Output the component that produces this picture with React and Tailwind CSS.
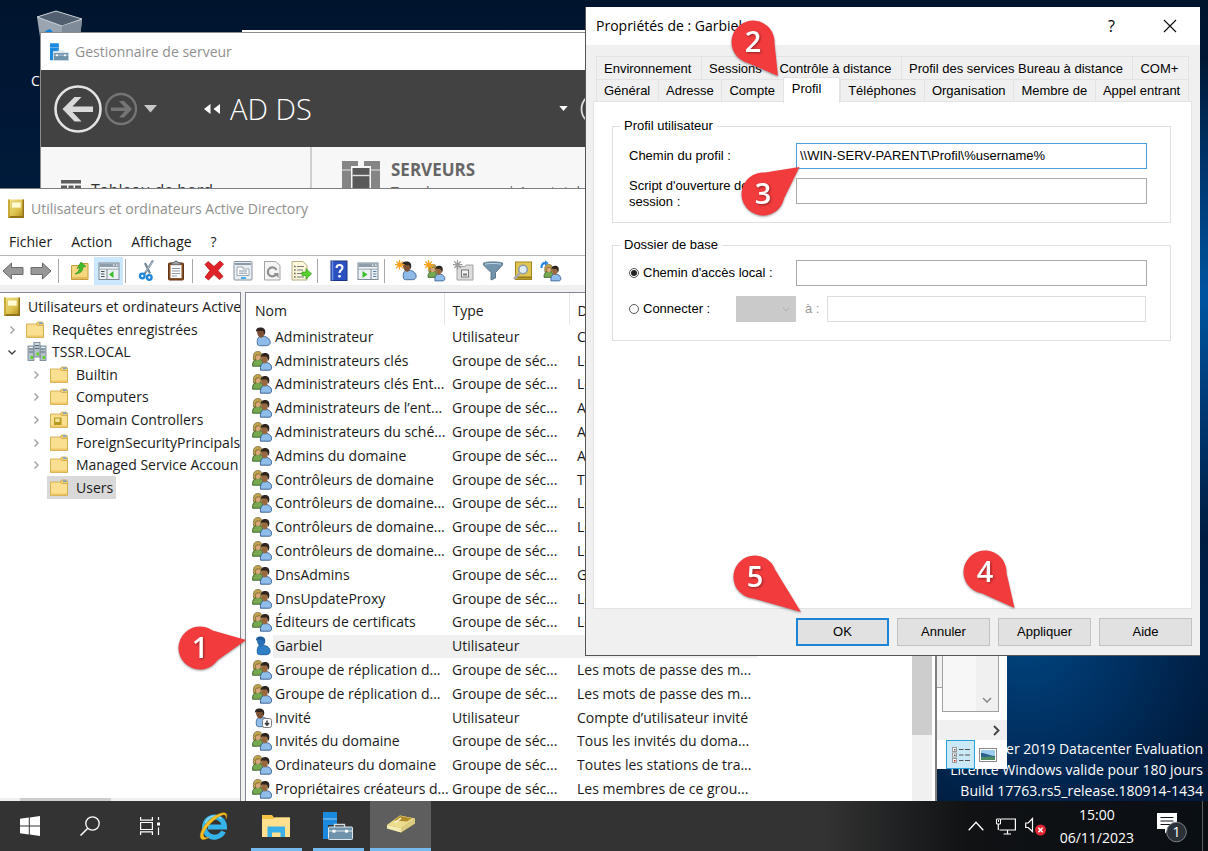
import React from "react";

const TABLE_ROWS = [
  ["user", "Administrateur", "Utilisateur", "Compte d’utilisateur d’..."],
  ["group", "Administrateurs clés", "Groupe de séc...", "Les membres de ce grou..."],
  ["group", "Administrateurs clés Ent...", "Groupe de séc...", "Les membres de ce grou..."],
  ["group", "Administrateurs de l’ent...", "Groupe de séc...", "Administrateurs désigné..."],
  ["group", "Administrateurs du sché...", "Groupe de séc...", "Administrateurs désigné..."],
  ["group", "Admins du domaine", "Groupe de séc...", "Administrateurs désigné..."],
  ["group", "Contrôleurs de domaine", "Groupe de séc...", "Tous les contrôleurs de ..."],
  ["group", "Contrôleurs de domaine...", "Groupe de séc...", "Les membres de ce grou..."],
  ["group", "Contrôleurs de domaine...", "Groupe de séc...", "Les membres de ce grou..."],
  ["group", "Contrôleurs de domaine...", "Groupe de séc...", "Les membres de ce grou..."],
  ["group", "DnsAdmins", "Groupe de séc...", "Groupe des administrat..."],
  ["group", "DnsUpdateProxy", "Groupe de séc...", "Les clients DNS qui so..."],
  ["group", "Éditeurs de certificats", "Groupe de séc...", "Les membres de ce grou..."],
  ["selected", "Garbiel", "Utilisateur", ""],
  ["group", "Groupe de réplication d...", "Groupe de séc...", "Les mots de passe des m..."],
  ["group", "Groupe de réplication d...", "Groupe de séc...", "Les mots de passe des m..."],
  ["guest", "Invité", "Utilisateur", "Compte d’utilisateur invité"],
  ["group", "Invités du domaine", "Groupe de séc...", "Tous les invités du doma..."],
  ["group", "Ordinateurs du domaine", "Groupe de séc...", "Toutes les stations de tra..."],
  ["group", "Propriétaires créateurs d...", "Groupe de séc...", "Les membres de ce grou..."],
];

/* ---------- people ---------- */

function Person({ x = 0, y = 0, body = "#8fbbe8", edge = "#3f6796", head = "#7d4f33", hair = "#2e2420" }) {
  return (
    <g transform={`translate(${x} ${y})`}>
      <path d="M3.500 17C2.600 12.600 3.600 10 6 8.600l4.500.2c3.800 1.200 5.700 3.400 5.700 6.200 0 1.900-1.700 2.900-3.700 3.200H6.500C4.800 18.200 3.700 17.800 3.500 17Z" fill={body} stroke={edge} strokeWidth=".9" />
      <path d="M3 4C3 1.500 4.600.5 6.600.5S10.600 1.600 10.600 4.300c0 3-1.400 6-3.400 6S3 7.300 3 4Z" fill={head} />
      <path d="M2 4.600C1.600 1.400 3.600 0 6.500 0s5.300 1.600 4.700 5.600L10 7.800c.2-2.400-.3-4-1.300-4.500C6.800 3.800 4 3.400 3 3.200Z" fill={hair} />
    </g>
  );
}

function UserIcon({ selected }) {
  return (
    <svg viewBox="0 0 20 20" className="size-5 shrink-0" aria-hidden="true">
      {selected ? (
        <Person x={2} y={.5} body="#2f7fc6" edge="#1d5c9c" head="#2a6fb4" hair="#1f5c9d" />
      ) : (
        <Person x={2} y={.5} />
      )}
    </svg>
  );
}

function Pair() {
  return (
    <g>
      <path d="M.6 15.200c-.3-3.700.9-5.700 2.800-6.600h4.900c2 .8 3 2.900 3 6.600Z" fill="#76a94f" stroke="#35602a" strokeWidth=".9" />
      <ellipse cx="5.800" cy="5.300" rx="2.700" ry="4" fill="#dba87c" />
      <path d="M1.600 9C.9 3.500 1.900.6 5.800.4c3.800.2 5 2.600 4.300 7.800L8.500 8.600c.4-2.700.1-4.200-.8-5-1.600.6-2.800.6-3.600.5-.7 1.300-.6 3-.3 4.900Z" fill="#bfa34c" stroke="#5e4a1c" strokeWidth=".6" />
      <path d="M8.500 19.200c-.5-4.300.7-6.700 2.800-7.500l4-.1c3.200.9 4.400 3 4.400 5.400 0 1.400-1 2-2.500 2.200Z" fill="#8fbdea" stroke="#33588a" strokeWidth=".9" />
      <ellipse cx="12.800" cy="7.800" rx="3" ry="4.500" fill="#99683f" />
      <path d="M9 6.500C8.600 3.300 10.600 2 13.200 2c3 0 4.800 2 4 6l-1.300 2.200c.1-2.600-.4-4.200-1.400-4.800-1.800.4-3.500 0-4.300-.2Z" fill="#2b241f" />
    </g>
  );
}

function GroupIcon() {
  return (
    <svg viewBox="0 0 20 20" className="size-5 shrink-0" aria-hidden="true">
      <Pair />
    </svg>
  );
}

function GuestIcon() {
  return (
    <svg viewBox="0 0 20 20" className="size-5 shrink-0" aria-hidden="true">
      <Person x={1} y={.5} />
      <rect x="10.500" y="10.500" width="9" height="9" rx="2" fill="#f8f8f8" stroke="#7b7b7b" />
      <path d="M15 12.500v4M13 15l2 2.200L17 15" fill="none" stroke="#333" strokeWidth="1.400" />
    </svg>
  );
}

/* ---------- tree and title icons ---------- */

function BookIcon() {
  return (
    <svg viewBox="0 0 18 20" className="h-5 w-[18px] shrink-0" aria-hidden="true">
      <defs>
        <linearGradient id="gold" x1="0" y1="0" x2="1" y2="1">
          <stop offset="0" stopColor="#f3e58c" />
          <stop offset=".6" stopColor="#dcc04b" />
          <stop offset="1" stopColor="#a88518" />
        </linearGradient>
      </defs>
      <rect x="1" y=".5" width="16" height="18.500" fill="url(#gold)" />
      <path d="M1 17h16v2H1ZM15.500.5H17V19h-1.500Z" fill="#94741b" />
      <rect x="1" y=".5" width="2" height="18" fill="#c9a93a" />
      <rect x="4.500" y="3" width="9.500" height="6" fill="#fffbd2" stroke="#d9c25c" strokeWidth=".7" />
    </svg>
  );
}

function FolderIcon({ badge }) {
  return (
    <svg viewBox="0 0 20 18" className="h-[18px] w-5 shrink-0" aria-hidden="true">
      <path d="M11 3.500 12.500 1h5l1 1.500V16H11Z" fill="#f0cd6c" stroke="#cda549" strokeWidth=".8" />
      <path d="M14 2.200h3.500" stroke="#6f9fd8" strokeWidth="1.500" />
      <path d="M1.500 3H11l1.500 1.500H18.500V16.500H1.500Z" fill="#fbdf90" stroke="#d3ab50" strokeWidth=".9" />
      <path d="M2 14.500h16v1.600H2Z" fill="#efc764" />
      {badge && (
        <g>
          <rect x="5" y="6.500" width="7.500" height="7.500" fill="#b8981e" />
          <rect x="6.200" y="7.500" width="4.500" height="3.500" fill="#f0e29a" />
        </g>
      )}
    </svg>
  );
}

function DomainIcon() {
  return (
    <svg viewBox="0 0 20 20" className="size-5 shrink-0" aria-hidden="true">
      {[[1, 4], [13, 4], [7, 0.5]].map(([x, y]) => (
        <g key={x}>
          <rect x={x} y={y} width="6" height="14.500" fill="#b6c2cc" stroke="#6d7f8d" strokeWidth=".8" />
          <path d={`M${x + 1} ${y + 3}h4M${x + 1} ${y + 6}h4`} stroke="#566a79" />
          <path d={`M${x + 1} ${y + 1.500}h4`} stroke="#eef4f8" />
          <rect x={x + 2.500} y={y + 10} width="2.500" height="3" fill="#5ed321" />
        </g>
      ))}
    </svg>
  );
}

function ServerAppIcon({ className }) {
  return (
    <svg viewBox="0 0 30 28" className={className} aria-hidden="true">
      <path d="M0 0h14v13H5v14H0Z" fill="#1b8ade" />
      <path d="M0 7h14" stroke="#a7d4f5" strokeWidth=".9" />
      <path d="M11.500 15v-2.500h10V15" fill="none" stroke="#cddbe3" strokeWidth="1.400" />
      <rect x="5.500" y="15" width="24" height="12.500" rx=".8" fill="#6f93ab" stroke="#dbe6ec" strokeWidth="1" />
      <path d="M6 19h23.500" stroke="#dbe6ec" />
      <rect x="9.500" y="17.800" width="3" height="2.800" fill="#fff" />
      <rect x="22" y="17.800" width="3" height="2.800" fill="#fff" />
    </svg>
  );
}

/* ---------- toolbar icons ---------- */

const Win = ({ flip }) => (
  <g>
    <rect x="1" y="3" width="20" height="16.500" fill="#eef1f4" stroke="#7d8b99" />
    <rect x="1.500" y="3.500" width="19" height="3.500" fill="#8f9dab" />
    <path d="M15 5.200h1.500M18 5.200h1.500" stroke="#fff" strokeWidth="1.200" />
    <path d="M1 9.200h20" stroke="#9aa7b3" />
    <path d={flip ? "M14 9v10" : "M9 9v10"} stroke="#7d8b99" />
    {flip ? (
      <g>
        <path d="M5.500 11v7l5-3.500Z" fill="#39c02b" />
        <path d="M16 11.500h3.500M16 14h3.500M16 16.500h3.500" stroke="#5680b0" strokeWidth="1.200" />
      </g>
    ) : (
      <g>
        <path d="M15.500 11v7l-4.500-3.500Z" fill="#39c02b" />
        <path d="M3 11.500h3.500M3 14h3.500M3 16.500h3.500" stroke="#444f5a" strokeWidth="1.200" />
      </g>
    )}
  </g>
);

const Burst = ({ color = "#f6a01f" }) => (
  <g>
    <path d="M4.500 0v9.500M0 4.700h9.500M1.200 1.400l6.700 6.700M7.900 1.400 1.200 8.100" stroke={color} strokeWidth="1.300" />
    <circle cx="4.600" cy="4.700" r="2.300" fill={color} />
  </g>
);

const TOOLS = {
  back: (
    <path d="M1 11 9.500 3v4.500H21v7H9.500V19Z" fill="#989898" stroke="#6c6c6c" />
  ),
  forward: (
    <path d="M21 11 12.500 3v4.500H1v7h11.500V19Z" fill="#989898" stroke="#6c6c6c" />
  ),
  up: (
    <g>
      <path d="M2.500 5.500h8l1-2h7.500v16H2.500Z" fill="#f6d77f" stroke="#c79c3f" />
      <path d="M3 17h15.500v2H3Z" fill="#e6b95a" />
      <path d="M6 14c3-1.500 4.500-3.500 4.500-6.500L8 8.500 12 2l5 4.500-3 .5c0 4-2.500 6.500-8 7Z" fill="#41ba2d" stroke="#268c18" strokeWidth=".6" />
    </g>
  ),
  tree: <Win />,
  cut: (
    <g fill="none">
      <path d="M17 .5 8.500 14M9 3l5 10.500" stroke="#73879a" strokeWidth="2.200" />
      <path d="M16.500 1.500 9.500 12" stroke="#c9d6e2" strokeWidth=".8" />
      <circle cx="6.300" cy="16" r="2.300" stroke="#1f86dc" strokeWidth="2.300" />
      <circle cx="13.300" cy="17.500" r="2.300" stroke="#1f86dc" strokeWidth="2.300" />
    </g>
  ),
  paste: (
    <g>
      <rect x="3.500" y="3" width="15" height="17" rx="1" fill="#8a4f24" stroke="#60351a" />
      <rect x="5.500" y="5" width="11" height="13" fill="#fff" />
      <path d="M7 8.500h8M7 11h8M7 13.500h8M7 16h5" stroke="#8f9aa6" />
      <path d="M7 4.800V2.500h2l1-1.500h2l1 1.500h2v2.300Z" fill="#9a9fa5" stroke="#5c5f63" strokeWidth=".7" />
    </g>
  ),
  remove: (
    <path d="m2 4.500 3-3 6 5 6-5.500 3.500 3L15 10.500l5 6-3.500 3L11 14.500 5.500 20 2 17l5-6.500Z" fill="#df2326" stroke="#b3191c" strokeWidth=".8" />
  ),
  props: (
    <g>
      <rect x="2" y="1.500" width="18" height="18.500" rx="1" fill="#e9eef2" stroke="#8593a0" />
      <path d="M3 4h16" stroke="#8c9aa7" strokeWidth="2" />
      <path d="M5 7h6v2h6v6.500H5Z" fill="#fff" stroke="#9aa8b5" />
      <path d="M7 11h8M7 13.200h8" stroke="#7f93a6" />
      <path d="M9 18h5" stroke="#2fa9ee" strokeWidth="1.800" />
    </g>
  ),
  refresh: (
    <g>
      <path d="M3.500 1.500h11l4.500 4V20H3.500Z" fill="#f4f4f4" stroke="#a3a3a3" />
      <path d="M15 14.500A4.500 4.500 0 1 1 15.500 10" fill="none" stroke="#8f8f8f" strokeWidth="2.200" />
      <path d="M12.500 13h5v5Z" fill="#8f8f8f" />
    </g>
  ),
  exportList: (
    <g>
      <path d="M2 1.500h11l4 4V20H2Z" fill="#fdf8dc" stroke="#b4ac85" />
      <path d="M7 6.500h7M7 10h6M7 13.500h5M7 17h7" stroke="#777" strokeWidth="1.200" />
      <path d="M4.200 6.500h1.300M4.200 10h1.300M4.200 13.500h1.300M4.200 17h1.300" stroke="#444" strokeWidth="1.300" />
      <path d="M12 12h4V8.500L21.500 14 16 19v-3.500h-4Z" fill="#57d130" stroke="#2f9c18" strokeWidth=".7" />
    </g>
  ),
  help: (
    <g>
      <rect x="3" y="1" width="16" height="19.500" fill="#2a51bf" stroke="#1b3384" />
      <path d="M4.500 1v19.500" stroke="#6f92e8" strokeWidth="1.500" />
      <path d="M8.500 8c0-2 1.200-3 3-3s3 1 3 2.700c0 2.300-3 2.500-3 5.300" fill="none" stroke="#fff" strokeWidth="2" />
      <circle cx="11.500" cy="16.300" r="1.300" fill="#fff" />
    </g>
  ),
  action: <Win flip />,
  newUser: (
    <g>
      <Person x={5} y={1.500} />
      <Burst />
    </g>
  ),
  newGroup: (
    <g>
      <g transform="translate(3.500 4) scale(.88)">
        <Pair />
      </g>
      <Burst />
    </g>
  ),
  newUnit: (
    <g>
      <path d="M4 6.500h8l1-1.500h7v15H4Z" fill="#dcdcdc" stroke="#a2a2a2" />
      <rect x="8.500" y="10" width="7" height="7" fill="#f5f5f5" stroke="#777" />
      <path d="M10 14.500h4" stroke="#777" strokeWidth="2" />
      <Burst color="#9d9d9d" />
    </g>
  ),
  filter: (
    <g>
      <path d="M1.500 3c4-1.500 15-1.500 19 0v2L13.500 12.500V18L9 20v-7.500L1.500 5Z" fill="#7295ad" stroke="#48677d" strokeWidth=".8" />
      <path d="M3 4.200c4-1 12-1 16 0" stroke="#bcd2e0" fill="none" />
    </g>
  ),
  find: (
    <g>
      <rect x="4.500" y="2" width="16" height="17.500" fill="#e0c551" stroke="#a0851f" />
      <path d="M5 17.500h15.500" stroke="#94781b" strokeWidth="2" />
      <circle cx="12" cy="9.500" r="4.300" fill="#e0edf4" stroke="#8b9da8" strokeWidth="1.600" />
      <path d="m9 13-6 6" stroke="#a9a9a9" strokeWidth="2.500" />
    </g>
  ),
  addTo: (
    <g>
      <g transform="translate(3.500 4) scale(.88)">
        <Pair />
      </g>
      <path d="M.5 8C.5 3.500 2.500 1.700 5 2V.3L8.500 3 5 6V4.200C3.200 4.200 2.500 5.500 2.500 8Z" fill="#2b86dd" />
    </g>
  ),
};

const TOOLBAR = [
  ["forward", "Suivant"], null, ["up", "Monter"], ["tree", "Afficher l’arborescence"], null,
  ["cut", "Couper"], ["paste", "Coller"], null,
  ["remove", "Supprimer"], ["props", "Propriétés"], ["refresh", "Actualiser"], ["exportList", "Exporter la liste"], null,
  ["help", "Aide"], ["action", "Volet Actions"], null,
  ["newUser", "Nouvel utilisateur"], ["newGroup", "Nouveau groupe"], ["newUnit", "Nouvelle unité"], ["filter", "Filtrer"], ["find", "Rechercher"], ["addTo", "Ajouter à un groupe"],
];

function Tool({ name, label, className }) {
  return (
    <button type="button" aria-label={label} className={`flex h-7 items-center justify-center ${className}`}>
      <svg viewBox="0 0 22 22" className="size-[22px] shrink-0" aria-hidden="true">{TOOLS[name]}</svg>
    </button>
  );
}

/* ---------- desktop ---------- */

function RecycleBin() {
  return (
    <div className="absolute left-[25px] top-[10px] flex w-[70px] flex-col items-center gap-[5px]">
      <svg viewBox="0 0 48 56" className="h-14 w-12" aria-hidden="true">
        <path d="M1 7 20 1l26 9-5 44H8Z" fill="#9aa5b1" />
        <path d="M1 7 20 1l26 8-20 7Z" fill="#525f70" stroke="#c9d1d9" />
        <path d="m26 16 20-6-5 44H26Z" fill="#7f8b98" />
        <path d="m9 21 5-2 4 4-5 5Z" fill="#1683d8" />
      </svg>
      <span className="text-sm leading-5 text-white">Corbeille</span>
    </div>
  );
}

function Watermark() {
  return (
    <p className="absolute bottom-0 right-[5px] whitespace-nowrap text-right text-sm leading-[21px] text-white">
      Windows Server 2019 Datacenter Evaluation
      <br />
      Licence Windows valide pour 180 jours
      <br />
      Build 17763.rs5_release.180914-1434
    </p>
  );
}

function ExplorerWindow() {
  return (
    <section aria-label="Explorateur" className="absolute bottom-8 left-[242px] right-[201px] top-[30px] flex flex-col bg-white">
      <div className="flex flex-1 justify-end pr-2">
        <div className="w-2 self-stretch bg-white pb-6">
          <div className="h-full border-b border-[#a0a0a0] bg-[#f0f0f0]" />
        </div>
        <div className="flex w-[57px] justify-end border border-[#a0a0a0] bg-[#f7f7f7]">
          <div className="flex w-[22px] items-end justify-center bg-[#f0f0f0] pb-2">
            <svg viewBox="0 0 10 6" className="h-1.5 w-2.5" aria-hidden="true">
              <path d="m1 1 4 4 4-4" fill="none" stroke="#8a8a8a" strokeWidth="1.600" />
            </svg>
          </div>
        </div>
      </div>
      <div className="mt-2 flex h-5 items-center justify-end bg-[#f0f0f0] pr-[7px]">
        <svg viewBox="0 0 7 11" className="h-[11px] w-[7px]" aria-hidden="true">
          <path d="m1 1 4.500 4.500L1 10" fill="none" stroke="#444" strokeWidth="1.900" />
        </svg>
      </div>
      <div className="flex h-[29px] items-center justify-end gap-1 pr-[10px]">
        <button type="button" aria-label="Détails" className="flex size-[29px] items-center justify-center border border-[#26a0da] bg-[#cbe8f6]">
          <svg viewBox="0 0 18 16" className="h-4 w-[18px]" aria-hidden="true">
            {[0, 5.500, 11].map((y) => (
              <g key={y}>
                <rect x=".5" y={y + 0.500} width="4" height="4" fill="#fff" stroke="#9a9a9a" />
                <rect x="2" y={y + 2} width="1.500" height="1.500" fill={y === 11 ? "#c22" : "#556"} />
                <path d={`M7 ${y + 2.500}h4.500M13 ${y + 2.500}h5`} stroke="#555" />
              </g>
            ))}
          </svg>
        </button>
        <button type="button" aria-label="Miniatures" className="flex items-center justify-center">
          <svg viewBox="0 0 18 14" className="h-3.5 w-[18px]" aria-hidden="true">
            <rect x=".5" y=".5" width="17" height="13" fill="#fff" stroke="#8a8a8a" />
            <rect x="2" y="2" width="14" height="10" fill="#9fcdf0" />
            <path d="M2 5c5 0 7 2.500 14 3v2H2Z" fill="#2a5f8f" />
            <path d="M2 9c5 0 9-1 14 0v3H2Z" fill="#4e8b63" />
          </svg>
        </button>
      </div>
    </section>
  );
}

function ServerManager() {
  return (
    <section aria-label="Gestionnaire de serveur" className="absolute bottom-24 left-10 right-[300px] top-8 flex flex-col border border-[#8c8c8c] bg-[#f7f7f7]">
      <header className="flex h-[37px] items-center gap-1.5 bg-white pl-[9px] text-sm text-[#8f8f8f]">
        <ServerAppIcon className="h-5 w-[19px]" />
        <h2>Gestionnaire de serveur</h2>
      </header>
      <div className="flex h-[77px] items-center bg-[#424242] pl-[13px] text-white">
        <button type="button" aria-label="Précédent">
          <svg viewBox="0 0 48 48" className="size-12" aria-hidden="true">
            <circle cx="24" cy="24" r="22.500" fill="none" stroke="#e3e3e3" strokeWidth="2.600" />
            <path d="M39 21.500H18.500l9-9.500h-7L8.500 24l12 12.500h7l-9-9.500H39Z" fill="#d9d9d9" />
          </svg>
        </button>
        <button type="button" aria-label="Suivant" className="ml-0.5">
          <svg viewBox="0 0 34 34" className="size-[34px]" aria-hidden="true">
            <circle cx="17" cy="17" r="15" fill="none" stroke="#757575" strokeWidth="2.300" />
            <path d="M7 15.500h14L15 9h5l8 8-8 8.500h-5l6-6.500H7Z" fill="#757575" />
          </svg>
        </button>
        <svg viewBox="0 0 13 8" className="ml-[6px] h-2 w-[13px]" aria-hidden="true">
          <path d="M0 0h13L6.500 7.500Z" fill="#c8c8c8" />
        </svg>
        <svg viewBox="0 0 18 10" className="ml-[46px] h-2.5 w-[18px]" aria-hidden="true">
          <path d="M7.500 0v10L1 5ZM17 0v10l-6.500-5Z" fill="#fff" />
        </svg>
        <h3 className="ml-[9px] w-[329px] pt-px text-[29px] font-light leading-9">AD DS</h3>
        <svg viewBox="0 0 10 6" className="h-[5px] w-[9px]" aria-hidden="true">
          <path d="M0 0h10L5 6Z" fill="#fff" />
        </svg>
        <svg viewBox="0 0 34 34" className="ml-3 size-[34px]" aria-hidden="true">
          <circle cx="17" cy="17" r="15.500" fill="none" stroke="#ddd" strokeWidth="1.800" />
        </svg>
      </div>
      <div className="flex flex-1 overflow-hidden">
        <nav className="w-[271px] border-r-2 border-[#cfcfcf] pl-5 pt-[31px]">
          <a href="#dashboard" className="flex items-start gap-[10px] text-base leading-6 text-[#333]">
            <svg viewBox="0 0 20 20" className="mt-[2px] size-5" aria-hidden="true">
              <path d="M0 0h20v3.500H0ZM0 5.500h6V20H0ZM7.500 5.500h5V20h-5ZM14 5.500h6V20h-6Z" fill="#5d5d5d" />
            </svg>
            Tableau de bord
          </a>
        </nav>
        <div className="flex items-start gap-[11px] pl-[30px] pt-[11px]">
          <svg viewBox="0 0 38 40" className="mt-[3px] h-10 w-[38px]" aria-hidden="true">
            <path d="M0 0h16v5H9v35H0ZM22 0h16v40h-9V5h-7Z" fill="#858585" />
            <path d="M0 9h9M29 9h9" stroke="#e4e4e4" />
            <path d="M10.500 7h17v33h-17Z" fill="#595959" />
            <path d="M10.500 14.500h17" stroke="#e4e4e4" strokeWidth="1.400" />
          </svg>
          <div>
            <h4 className="text-[17px] font-bold leading-6 text-[#666]">SERVEURS</h4>
            <p className="text-sm leading-5 text-[#666]">Tous les serveurs | 1 au total</p>
          </div>
        </div>
      </div>
    </section>
  );
}

/* ---------- Active Directory console ---------- */

function Chevron({ open }) {
  return (
    <svg viewBox="0 0 8 8" className="size-2 shrink-0" aria-hidden="true">
      <path d={open ? "M.5 2.500 4 6l3.500-3.500" : "M2.500.5 6 4 2.500 7.500"} fill="none" stroke={open ? "#404040" : "#a0a0a0"} strokeWidth="1.400" />
    </svg>
  );
}

function TreeChild({ label, badge }) {
  return (
    <li className="flex items-center gap-[9px] pl-8">
      <Chevron />
      <span className="flex items-center gap-[7px]">
        <FolderIcon badge={badge} />
        {label}
      </span>
    </li>
  );
}

function Tree() {
  return (
    <nav aria-label="Arborescence" className="flex w-[241px] shrink-0 flex-col justify-between overflow-hidden border-r border-t border-[#828790] bg-white">
      <ul className="grid h-[206px] auto-rows-fr whitespace-nowrap pt-[3px]">
        <li className="flex items-center gap-[7px] pl-[3px]">
          <BookIcon />
          Utilisateurs et ordinateurs Active
        </li>
        <li className="flex items-center gap-[9px] pl-2">
          <Chevron />
          <span className="flex items-center gap-[7px]">
            <FolderIcon />
            Requêtes enregistrées
          </span>
        </li>
        <li className="flex items-center gap-[11px] pl-2">
          <Chevron open />
          <span className="flex items-center gap-[5px]">
            <DomainIcon />
            TSSR.LOCAL
          </span>
        </li>
        <TreeChild label="Builtin" />
        <TreeChild label="Computers" />
        <TreeChild label="Domain Controllers" badge />
        <TreeChild label="ForeignSecurityPrincipals" />
        <TreeChild label="Managed Service Accoun" />
        <li className="flex pl-[47px]">
          <span className="flex items-center gap-[7px] bg-[#d9d9d9] pl-0.5 pr-[3px]">
            <FolderIcon />
            Users
          </span>
        </li>
      </ul>
      <div className="h-[3px] bg-[#f0f0f0] pl-5">
        <div className="h-full w-[91px] bg-[#cdcdcd]" />
      </div>
    </nav>
  );
}

function RowIcon({ kind }) {
  if (kind === "group") return <GroupIcon />;
  if (kind === "guest") return <GuestIcon />;
  return <UserIcon selected={kind === "selected"} />;
}

function ObjectList() {
  return (
    <div className="flex min-w-0 flex-1 justify-between overflow-hidden border-l border-t border-[#828790] bg-white">
      <table className="h-[508px] w-[511px] table-fixed border-collapse whitespace-nowrap text-left">
        <thead>
          <tr className="h-8">
            <th scope="col" className="w-[198px] border-r border-[#e5e5e5] pl-[9px] pt-1 font-normal">Nom</th>
            <th scope="col" className="w-[125px] border-r border-[#e5e5e5] pl-2 pt-1 font-normal">Type</th>
            <th scope="col" className="pl-2 pt-1 font-normal">Description</th>
          </tr>
        </thead>
        <tbody>
          {TABLE_ROWS.map(([kind, name, type, description], i) => (
            <tr key={i} className="h-[23px]">
              <td className="p-0 pl-1.5">
                <div className="flex h-[23px] items-center">
                  <RowIcon kind={kind} />
                  <span className={`ml-[1px] flex h-full flex-1 items-center pl-0.5 ${kind === "selected" ? "bg-[#f0f0f0]" : ""}`}>{name}</span>
                </div>
              </td>
              <td className="p-0">
                <div className={`flex h-[23px] items-center pl-2 ${kind === "selected" ? "bg-[#f0f0f0]" : ""}`}>{type}</div>
              </td>
              <td className="p-0">
                <div className={`flex h-[23px] items-center pl-2 ${kind === "selected" ? "bg-[#f0f0f0]" : ""}`}>{description}</div>
              </td>
            </tr>
          ))}
        </tbody>
      </table>
      <div className="mr-[3px] flex w-5 flex-col bg-[#f0f0f0] pb-[66px]">
        <div className="flex-1 bg-[#cdcdcd]" />
      </div>
    </div>
  );
}

function DirectoryConsole() {
  return (
    <section aria-label="Utilisateurs et ordinateurs Active Directory" className="absolute bottom-0 left-0 right-[271px] top-[188px] flex flex-col border-r-2 border-t border-[#7f7f7f] bg-white text-sm leading-5 text-[#1a1a1a]">
      <header className="flex h-[39px] shrink-0 items-center gap-1.5 pl-[7px] text-[#8f8f8f]">
        <BookIcon />
        <h2>Utilisateurs et ordinateurs Active Directory</h2>
      </header>
      <nav aria-label="Menu" className="flex h-[27px] shrink-0 items-center gap-[19px] pl-[9px] pt-px">
        <button type="button">Fichier</button>
        <button type="button">Action</button>
        <button type="button">Affichage</button>
        <button type="button">?</button>
      </nav>
      <div className="flex h-[30px] shrink-0 items-center border-t border-[#b9b9b9]">
        <Tool name="back" label="Précédent" className="w-[26px]" />
        {TOOLBAR.map((tool, i) =>
          tool ? (
            <Tool key={i} name={tool[0]} label={tool[1]} className={tool[0] === "tree" ? "w-[29px] bg-[#cce8ff]" : "w-[29px]"} />
          ) : (
            <span key={i} className={i === 1 ? "flex w-[10px] pl-[3px]" : "flex w-[9px] pl-0.5"}>
              <span className="h-6 w-px bg-[#a8a8a8]" />
            </span>
          )
        )}
      </div>
      <div className="flex min-h-0 flex-1 gap-1 bg-[#f0f0f0] pt-[7px]">
        <Tree />
        <ObjectList />
      </div>
    </section>
  );
}

/* ---------- properties dialog ---------- */

function Tab({ label, last }) {
  return (
    <button type="button" role="tab" aria-selected="false" className={`flex flex-auto items-center whitespace-nowrap border-l border-t border-[#e3e3e3] pl-[7px] pr-1.5 pt-px ${last ? "border-r" : ""}`}>
      {label}
    </button>
  );
}

function Field({ id, className, ...rest }) {
  return <input id={id} type="text" className={`h-[26px] min-w-0 border px-[3px] pb-0.5 text-black outline-none ${className}`} {...rest} />;
}

function PropertiesDialog() {
  return (
    <section role="dialog" aria-label="Propriétés de : Garbiel" className="absolute bottom-[145px] left-[585px] right-2 top-[7px] flex flex-col border-b border-l border-[#555] bg-[#f0f0f0] font-['Liberation_Sans',Arial,sans-serif] text-[13px] leading-4 text-black">
      <header className="flex h-[38px] shrink-0 items-center bg-white pl-[10px] pr-[23px] font-['Open_Sans',sans-serif] text-sm text-black">
        <h2 className="flex-1">Propriétés de : Garbiel</h2>
        <button type="button" aria-label="Aide contextuelle" className="w-[55px] text-left text-base">?</button>
        <button type="button" aria-label="Fermer">
          <svg viewBox="0 0 14 14" className="size-[14px]" aria-hidden="true">
            <path d="m1 1 12 12M13 1 1 13" stroke="#111" strokeWidth="1.200" />
          </svg>
        </button>
      </header>
      <div className="flex flex-1 flex-col pl-[7px] pr-2 pt-[11px]">
        <div role="tablist" className="flex flex-col px-[3px]">
          <div className="flex h-[23px]">
            <Tab label="Environnement" />
            <Tab label="Sessions" />
            <Tab label="Contrôle à distance" />
            <Tab label="Profil des services Bureau à distance" />
            <Tab label="COM+" last />
          </div>
          <div className="flex h-[22px]">
            <Tab label="Général" />
            <Tab label="Adresse" />
            <Tab label="Compte" />
            <button type="button" role="tab" aria-selected="true" className="relative z-10 -mb-0.5 -mt-0.5 flex flex-auto border-l border-r border-t border-[#e3e3e3] bg-white pl-2 pr-4 pt-[3px]">
              Profil
            </button>
            <Tab label="Téléphones" />
            <Tab label="Organisation" />
            <Tab label="Membre de" />
            <Tab label="Appel entrant" last />
          </div>
        </div>
        <div role="tabpanel" className="flex flex-1 flex-col gap-3.5 border border-[#e3e3e3] bg-white pl-[18px] pr-5 pt-4">
          <fieldset className="border border-[#e0e0e0] px-4 pb-3">
            <legend className="-ml-[9px] px-1">Profil utilisateur</legend>
            <div className="flex items-center pr-[7px] pt-[9px]">
              <label htmlFor="profile" className="w-[167px]">Chemin du profil :</label>
              <Field id="profile" defaultValue={"\\\\WIN-SERV-PARENT\\Profil\\%username%"} className="flex-1 border-[#4a9fe0] bg-white" />
            </div>
            <div className="flex items-start pr-[7px] pt-[9px]">
              <label htmlFor="script" className="w-[167px]">
                Script d'ouverture de
                <br />
                session :
              </label>
              <Field id="script" className="flex-1 border-[#aaa] bg-white" />
            </div>
          </fieldset>
          <fieldset className="border border-[#e0e0e0] px-4 pb-[18px]">
            <legend className="-ml-[9px] px-1">Dossier de base</legend>
            <div className="flex items-center pr-[7px] pt-[7px]">
              <label htmlFor="local" className="flex w-[167px] items-center gap-1">
                <input id="local" name="home" type="radio" defaultChecked className="size-[10px] appearance-none rounded-full border border-[#555] bg-[#222] bg-clip-content p-px" />
                Chemin d'accès local :
              </label>
              <Field id="local-path" aria-label="Chemin d'accès local" className="flex-1 border-[#aaa] bg-white" />
            </div>
            <div className="flex items-center pr-2 pt-[10px]">
              <label htmlFor="connect" className="flex w-[107px] items-center gap-1">
                <input id="connect" name="home" type="radio" className="size-[10px] appearance-none rounded-full border border-[#555] bg-white" />
                Connecter :
              </label>
              <div className="grid w-[60px] items-center">
                <select disabled aria-label="Lecteur" className="col-start-1 row-start-1 h-[26px] w-full appearance-none bg-[#cacaca]" />
                <svg viewBox="0 0 8 5" className="col-start-1 row-start-1 mr-1.5 h-[5px] w-2 justify-self-end" aria-hidden="true">
                  <path d="m1 1 3 3 3-3" fill="none" stroke="#aaa" />
                </svg>
              </div>
              <label htmlFor="remote" className="w-[31px] pl-[9px] text-[#9a9a9a]">à :</label>
              <Field id="remote" disabled className="flex-1 border-[#dedede] bg-white" />
            </div>
          </fieldset>
        </div>
        <footer className="flex justify-end gap-2 pb-[9px] pt-[9px]">
          <button type="button" className="h-7 w-[93px] border-2 border-[#1a84d9] bg-[#e1e1e1]">OK</button>
          <button type="button" className="h-7 w-[93px] border border-[#c2c2c2] bg-[#e1e1e1]">Annuler</button>
          <button type="button" className="h-7 w-[93px] border border-[#c2c2c2] bg-[#e1e1e1]">Appliquer</button>
          <button type="button" className="h-7 w-[93px] border border-[#c2c2c2] bg-[#e1e1e1]">Aide</button>
        </footer>
      </div>
    </section>
  );
}

/* ---------- numbered callouts ---------- */

// A drop: a circle around (60, 60) of a 120 px canvas whose tip lies at (dx, dy) from its centre.
function Marker({ number, dx, dy, spread = 44, className }) {
  const r = 21.5;
  const angle = Math.atan2(dy, dx);
  const s = (spread * Math.PI) / 180;
  const point = (a) => `${(60 + r * Math.cos(a)).toFixed(1)} ${(60 + r * Math.sin(a)).toFixed(1)}`;
  return (
    <svg viewBox="0 0 120 120" className={`pointer-events-none absolute z-20 size-[120px] drop-shadow-[0_1px_1px_rgba(0,0,0,0.4)] ${className}`}>
      <path d={`M${60 + dx} ${60 + dy}L${point(angle + s)}A${r} ${r} 0 1 1 ${point(angle - s)}Z`} fill="#f23b3d" />
      <text x="60" y="70" textAnchor="middle" fill="#fff" className="font-['Open_Sans',sans-serif] text-[29px] font-semibold drop-shadow-[1px_1px_1px_rgba(0,0,0,0.4)]">{number}</text>
    </svg>
  );
}

/* ---------- taskbar ---------- */

function TaskButton({ label, running, active, children }) {
  return (
    <button type="button" aria-label={label} className={`flex h-full flex-col items-center ${active ? "ml-px w-[61px] bg-[#5e5e5e]" : "w-[62px]"}`}>
      <span className="flex flex-1 items-center pt-[3px]">{children}</span>
      <span className={`h-[3px] ${running ? "bg-[#76b9ed]" : ""} ${active ? "w-full" : "w-[51px]"}`} />
    </button>
  );
}

function Taskbar() {
  return (
    <footer className="z-30 flex h-[50px] shrink-0 items-center justify-between bg-[linear-gradient(90deg,#333_0%,#333_68%,#101214_80%,#0a0f14_100%)] text-white">
      <div className="flex h-full items-center">
        <button type="button" aria-label="Démarrer" className="flex w-[60px] justify-center">
          <svg viewBox="0 0 20 20" className="size-5" aria-hidden="true">
            <path d="M0 2.800 8.800 1.500V9.500H0ZM9.800 1.400 20 0v9.500H9.800ZM0 10.500h8.800v8L0 17.300ZM9.800 10.500H20V20L9.800 18.600Z" fill="#fff" />
          </svg>
        </button>
        <button type="button" aria-label="Rechercher" className="flex w-[60px] justify-center">
          <svg viewBox="0 0 20 20" className="size-5" aria-hidden="true">
            <circle cx="12.500" cy="7.500" r="6.700" fill="none" stroke="#fff" strokeWidth="1.300" />
            <path d="M7.800 12.300.5 19.500" stroke="#fff" strokeWidth="1.500" />
          </svg>
        </button>
        <button type="button" aria-label="Affichage des tâches" className="flex w-[63px] justify-center pr-[3px]">
          <svg viewBox="0 0 20 20" className="size-5" aria-hidden="true">
            <path d="M.6 1v3.200h11.800V1M.6 19v-3.200h11.800V19M.6 6.500h11.800v7H.6ZM18.500 1v3M18.500 11.500V19" fill="none" stroke="#fff" strokeWidth="1.200" />
            <rect x="17" y="6.500" width="3" height="3" fill="#fff" />
          </svg>
        </button>
        <TaskButton label="Internet Explorer">
          <svg viewBox="0 0 30 30" className="size-[30px]" aria-hidden="true">
            <path d="M24.500 20.500A10 10 0 1 1 25.500 16H9" fill="none" stroke="#35b4ec" strokeWidth="5" />
            <path d="M22.500 7.500A10 10 0 0 0 6.500 12" fill="none" stroke="#8cdcfb" strokeWidth="1.600" />
            <path d="M27 8C31-1.500 20 .500 10 9.500 1.500 17.500-1 27.500 3.500 28.500c2 .5 5-1 7-2.500-8 3-8.500-4 1-13.500C19 5 28-.500 27 8Z" fill="#f7bf26" stroke="#d9940c" strokeWidth=".5" />
          </svg>
        </TaskButton>
        <TaskButton label="Explorateur de fichiers" running>
          <svg viewBox="0 0 28 24" className="h-6 w-7" aria-hidden="true">
            <path d="M0 1h10l2 2.500h16V23H0Z" fill="#f6c344" />
            <path d="M0 5h11l2-1.500h15V23H0Z" fill="#ffe08e" />
            <path d="M5.500 23V12.500H23V23h-4.500v-4.500h-8.500V23Z" fill="#39b0e8" />
          </svg>
        </TaskButton>
        <TaskButton label="Gestionnaire de serveur" running>
          <ServerAppIcon className="h-7 w-[30px]" />
        </TaskButton>
        <TaskButton label="Utilisateurs et ordinateurs Active Directory" running active>
          <svg viewBox="0 0 30 20" className="mb-1 h-5 w-[30px]" aria-hidden="true">
            <path d="M1 11 14 1.500l15 3v5L15 18.500 1 14.500Z" fill="#b3983a" />
            <path d="M1 11 14 1.500l15 3L15.500 14Z" fill="#ecdc8e" />
            <path d="m8 6.500 6-4.500 12 2.200-5 3.300Z" fill="#b08c2b" />
            <path d="m9 8.500 6-4.300" stroke="#fff9d4" strokeWidth="1.500" />
            <path d="M15.500 14 29 4.500v5L15 18.500Z" fill="#dccb83" />
            <path d="M1 11l14.500 3-.5 4.500-14-4Z" fill="#f4ebb4" />
          </svg>
        </TaskButton>
      </div>
      <div className="flex h-full items-center">
        <button type="button" aria-label="Icônes masquées">
          <svg viewBox="0 0 16 10" className="h-2.5 w-4" aria-hidden="true">
            <path d="m.7 9.300 7.300-8 7.300 8" fill="none" stroke="#fff" strokeWidth="1.300" />
          </svg>
        </button>
        <button type="button" aria-label="Réseau" className="ml-3">
          <svg viewBox="0 0 20 17" className="h-[17px] w-5" aria-hidden="true">
            <path d="M5 1h14.400v11H3.500M11.500 12v3.500M7.500 16h7.500M2.300 6v6" fill="none" stroke="#fff" strokeWidth="1.200" />
            <path d="M.5 1h4v5h-4ZM2.500 2v2" fill="none" stroke="#fff" />
          </svg>
        </button>
        <button type="button" aria-label="Volume" className="ml-[9px]">
          <svg viewBox="0 0 22 20" className="h-5 w-[22px]" aria-hidden="true">
            <path d="M.7 7h2.500l4.300-4.500v13L3.200 11.500H.7Z" fill="none" stroke="#fff" strokeWidth="1.200" />
            <circle cx="15.500" cy="14" r="5.500" fill="#e02632" />
            <path d="m13.300 11.800 4.400 4.400m0-4.400-4.400 4.400" stroke="#fff" strokeWidth="1.500" />
          </svg>
        </button>
        <time dateTime="2023-11-06T15:00" className="ml-[13px] flex flex-col text-center text-sm leading-[23px]">
          <span>15:00</span>
          <span>06/11/2023</span>
        </time>
        <button type="button" aria-label="Notifications" className="ml-[22px]">
          <svg viewBox="0 0 32 34" className="mt-1.5 h-[34px] w-8" aria-hidden="true">
            <path d="M1 1h20v16h-8l-4 4.500V17H1Z" fill="#fff" />
            <path d="M4.500 5.500h13M4.500 9h13M4.500 12.500h13" stroke="#101418" strokeWidth="1.200" />
            <circle cx="20.500" cy="20" r="9.800" fill="#2b3138" stroke="#7b8188" />
            <text x="20.500" y="25" textAnchor="middle" fill="#fff" className="text-sm">1</text>
          </svg>
        </button>
        <span className="ml-[14px] mr-[5px] h-full w-px bg-[#5a5d60]" />
      </div>
    </footer>
  );
}

export default function App() {
  return (
    <main className="flex h-screen flex-col overflow-hidden bg-[#001c3f] font-['Open_Sans','Noto_Sans',sans-serif]">
      <div className="relative flex-1 overflow-hidden bg-[radial-gradient(ellipse_200px_210px_at_85%_79%,#00447f_0%,#003061_50%,transparent_100%),radial-gradient(ellipse_260px_240px_at_100%_37%,#0055a0_0%,#003a75_45%,transparent_100%),linear-gradient(180deg,#00142e_0%,#001f45_40%,#001a3a_100%)]">
        <RecycleBin />
        <Watermark />
        <ExplorerWindow />
        <ServerManager />
        <DirectoryConsole />
        <PropertiesDialog />
        <Marker number="1" dx={46} dy={-8} spread={44} className="left-[140px] top-[588px]" />
        <Marker number="2" dx={25} dy={34} spread={50} className="left-[693px] top-[-18px]" />
        <Marker number="3" dx={36.5} dy={-27} spread={48} className="left-[703px] top-[134px]" />
        <Marker number="4" dx={29.5} dy={36} spread={48} className="left-[925px] top-[512px]" />
        <Marker number="5" dx={46} dy={35} spread={57} className="left-[695px] top-[517px]" />
      </div>
      <Taskbar />
    </main>
  );
}
